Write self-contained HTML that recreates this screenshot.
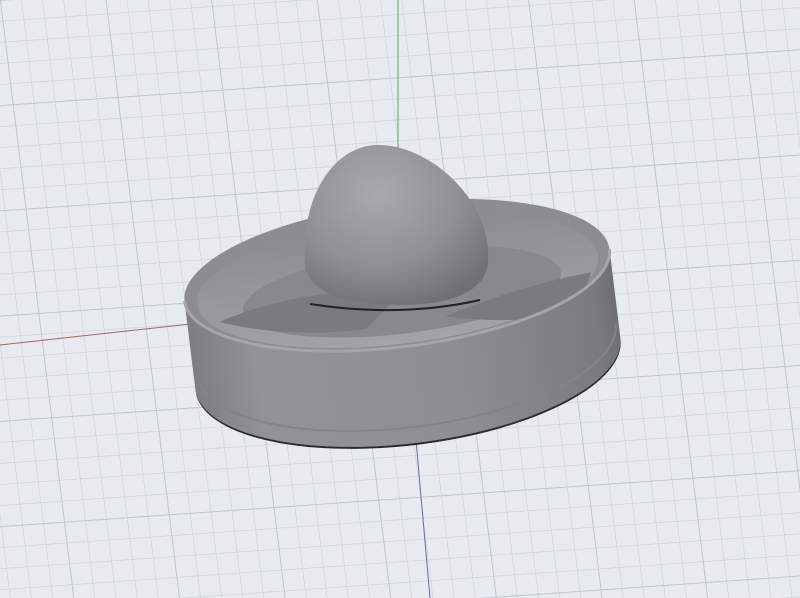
<!DOCTYPE html>
<html><head><style>html,body{margin:0;padding:0;width:800px;height:598px;overflow:hidden;background:#e7ebf0}</style></head>
<body>
<svg width="800" height="598" viewBox="0 0 800 598" xmlns="http://www.w3.org/2000/svg">
<defs>
<pattern id="g" width="21" height="21" patternUnits="userSpaceOnUse" patternTransform="rotate(-4) skewX(3)">
<path d="M0 0H21M0 0V21" stroke="#c9cfd8" stroke-width="1.2" fill="none"/>
</pattern>
<pattern id="g5" width="105" height="105" patternUnits="userSpaceOnUse" patternTransform="rotate(-4) skewX(3)">
<path d="M0 0H105M0 0V105" stroke="#b9c0cb" stroke-width="1.5" fill="none"/>
</pattern>
<linearGradient id="band" x1="0" x2="1" y1="0" y2="0">
<stop offset="0" stop-color="#7d7d82"/><stop offset="0.15" stop-color="#929297"/><stop offset="0.6" stop-color="#8e8e93"/><stop offset="0.95" stop-color="#7a7a7f"/><stop offset="1" stop-color="#6e6e73"/>
</linearGradient>
<radialGradient id="dome" cx="0.4" cy="0.3" r="0.75">
<stop offset="0" stop-color="#a9a9ad"/><stop offset="0.6" stop-color="#8f8f94"/><stop offset="1" stop-color="#6f6f74"/>
</radialGradient>
<linearGradient id="inner" x1="0" x2="0" y1="0" y2="1">
<stop offset="0" stop-color="#8a8a8f"/><stop offset="1" stop-color="#a4a4a8"/>
</linearGradient>
</defs>
<rect width="800" height="598" fill="#e7ebf0"/>
<rect width="800" height="598" fill="url(#g)"/>
<rect width="800" height="598" fill="url(#g5)"/>
<line x1="398" y1="0" x2="398" y2="150" stroke="#5fa85f" stroke-width="1"/>
<line x1="0" y1="345" x2="300" y2="312" stroke="#b06060" stroke-width="1"/>
<line x1="416" y1="440" x2="430" y2="598" stroke="#6a6aa8" stroke-width="1"/>
<g transform="rotate(-7 397 275)">
  <ellipse cx="397" cy="366" rx="214" ry="80" fill="#2a2a2e"/>
  <path d="M183 275 L183 364 A214 80 0 0 0 611 364 L611 275 Z" fill="url(#band)"/>
  <ellipse cx="397" cy="275" rx="214" ry="72" fill="#8c8c91"/>
  <ellipse cx="397" cy="280" rx="202" ry="64" fill="url(#inner)"/>
  <ellipse cx="400" cy="292" rx="160" ry="42" fill="#88888d"/>
  <path d="M215 300 Q300 275 400 292 L360 325 Q280 325 215 300Z" fill="#7a7a7f"/>
  <path d="M440 322 Q520 300 590 296 L570 335 Q500 338 440 322Z" fill="#7a7a7f"/>
  <path d="M330 240 Q400 225 470 245 L440 260 Q390 250 330 240Z" fill="#7f7f84"/>
</g>
<path d="M305 265 C300 195 335 145 378 145 C430 145 492 200 488 262 C486 292 450 305 400 305 C345 305 308 292 305 265Z" fill="url(#dome)"/>
<path d="M310 304 Q400 318 480 300" stroke="#222" stroke-width="2" fill="none"/>
<g transform="rotate(-7 397 275)">
  <path d="M183 275 A214 72 0 0 0 611 275 L611 364 A214 80 0 0 1 183 364 Z" fill="url(#band)"/>
  <path d="M183 275 A214 72 0 0 0 611 275" stroke="#a5a5aa" stroke-width="3" fill="none"/>
  <path d="M186 350 A211 78 0 0 0 608 350" stroke="#83838a" stroke-width="2" fill="none"/>
</g>
</svg>
</body></html>
